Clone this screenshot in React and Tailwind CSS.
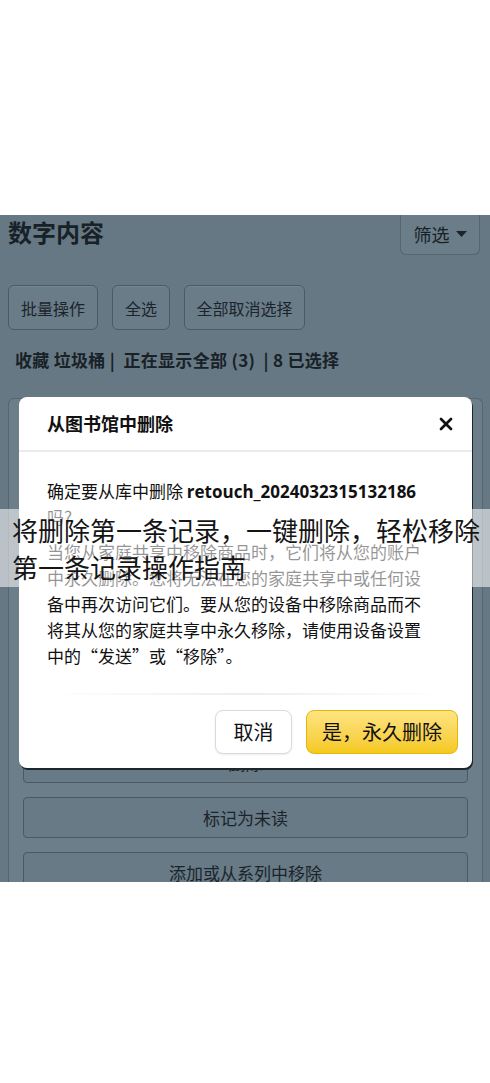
import { X } from "lucide-react";

const cjk = { fontFamily: '"Noto Sans CJK SC", "Noto Sans", sans-serif' };

function BgButton({ children, className = "" }) {
    return (
        <div
            className={`h-[45px] flex items-center justify-center whitespace-nowrap rounded-md border border-[#4b5b66] bg-[#6a7c88] text-[16px] text-[#1b242b] shadow-[inset_0_1px_0_rgba(255,255,255,0.08)] ${className}`}
        >
            {children}
        </div>
    );
}

function RowButton({ children }) {
    return (
        <div className="h-[41px] flex items-center justify-center rounded-[4px] border border-[#4a5a65] bg-[#677a86] text-[17px] text-[#1b242b]">
            {children}
        </div>
    );
}

export default function App() {
    return (
        <div className="relative w-full bg-white" style={cjk}>
            <div className="h-[215px] bg-white" />

            <div className="relative h-[667px] overflow-hidden bg-[#667883]">
                {/* header */}
                <div className="flex justify-between items-start">
                    <h1 className="pl-[8px] pt-[2px] text-[24px] font-bold text-[#182127] leading-[30px]">
                        数字内容
                    </h1>
                    <div className="mr-[10px] h-[40px] w-[80px] flex items-center justify-center gap-[6px] rounded-b-md border border-t-0 border-[#56666f] bg-[#6b7d88] text-[18px] text-[#182127]">
                        <span>筛选</span>
                        <svg width="11" height="7" viewBox="0 0 11 7">
                            <path d="M0 0 L11 0 L5.5 6 Z" fill="#1b242b" />
                        </svg>
                    </div>
                </div>

                {/* actions */}
                <div className="mt-[30px] flex gap-[14px] pl-[8px]">
                    <BgButton className="w-[90px]">批量操作</BgButton>
                    <BgButton className="w-[58px]">全选</BgButton>
                    <BgButton className="w-[121px]">全部取消选择</BgButton>
                </div>

                <p className="mt-[18px] pl-[15px] text-[17px] font-bold leading-[24px] text-[#182127] whitespace-nowrap tracking-[0.3px]">
                    收藏 垃圾桶 | &nbsp;正在显示全部 (3) &nbsp;| 8 已选择
                </p>

                {/* panel behind the dialog */}
                <div className="mt-[26px] ml-[8px] mr-[7px] rounded-t-md border border-b-0 border-[#56666f] bg-[#6c7e89] px-[14px] pt-[13px] flex flex-col gap-[14px]">
                    <RowButton>阅读</RowButton>
                    <RowButton>下载并传输</RowButton>
                    <RowButton>发送到设备</RowButton>
                    <RowButton>借出此书</RowButton>
                    <RowButton>清除最远阅读页</RowButton>
                    <RowButton>退回书籍</RowButton>
                    <RowButton>删除</RowButton>
                    <RowButton>标记为未读</RowButton>
                    <RowButton>添加或从系列中移除</RowButton>
                </div>

                {/* dialog */}
                <div className="absolute left-[19px] top-[182px] w-[453px] h-[371px] rounded-lg bg-white shadow-[1px_2px_0_#1f262b] flex flex-col">
                    <div className="h-[55px] flex items-center justify-between pl-[28px] pr-[16px] border-b-2 border-[#e9ecec]">
                        <h2 className="text-[18px] font-bold text-[#111]">从图书馆中删除</h2>
                        <X size={20} strokeWidth={3.2} className="text-[#111]" />
                    </div>
                    <div className="pl-[28px] pr-[40px] pt-[26px] text-[17px] leading-[25px] text-[#111]">
                        <p>
                            确定要从库中删除{" "}
                            <span className="font-bold" style={{ fontFamily: '"Open Sans", "Noto Sans", sans-serif' }}>
                                retouch_2024032315132186
                            </span>
                            <br />
                            吗?
                        </p>
                        <p className="mt-[10px] leading-[26px]">
                            当您从家庭共享中移除商品时，它们将从您的账户中永久删除。您将无法在您的家庭共享中或任何设备中再次访问它们。要从您的设备中移除商品而不将其从您的家庭共享中永久移除，请使用设备设置中的“发送”或“移除”。
                        </p>
                    </div>
                    <div className="mt-auto mx-[28px] h-[2px] bg-gradient-to-r from-transparent via-[#eceeee] to-transparent" />
                    <div className="flex justify-end gap-[14px] pt-[15px] pb-[14px] pr-[14px]">
                        <button className="h-[44px] w-[77px] rounded-lg border border-[#d6dbdb] bg-white text-[20px] text-[#111] shadow-[0_1px_2px_rgba(0,0,0,0.08)]">
                            取消
                        </button>
                        <button className="h-[44px] w-[152px] rounded-lg border border-[#e2b60b] bg-gradient-to-b from-[#ffe47e] to-[#f5c917] text-[20px] text-[#111]">
                            是，永久删除
                        </button>
                    </div>
                </div>
            </div>

            <div className="h-[201px] bg-white" />

            {/* caption band */}
            <div className="absolute left-0 top-[509px] w-full h-[78px] bg-white/55 pl-[12px] pt-[2px] text-[26px] leading-[37px] text-[#151515]">
                <p>将删除第一条记录，一键删除，轻松移除</p>
                <p>第一条记录操作指南</p>
            </div>
        </div>
    );
}
